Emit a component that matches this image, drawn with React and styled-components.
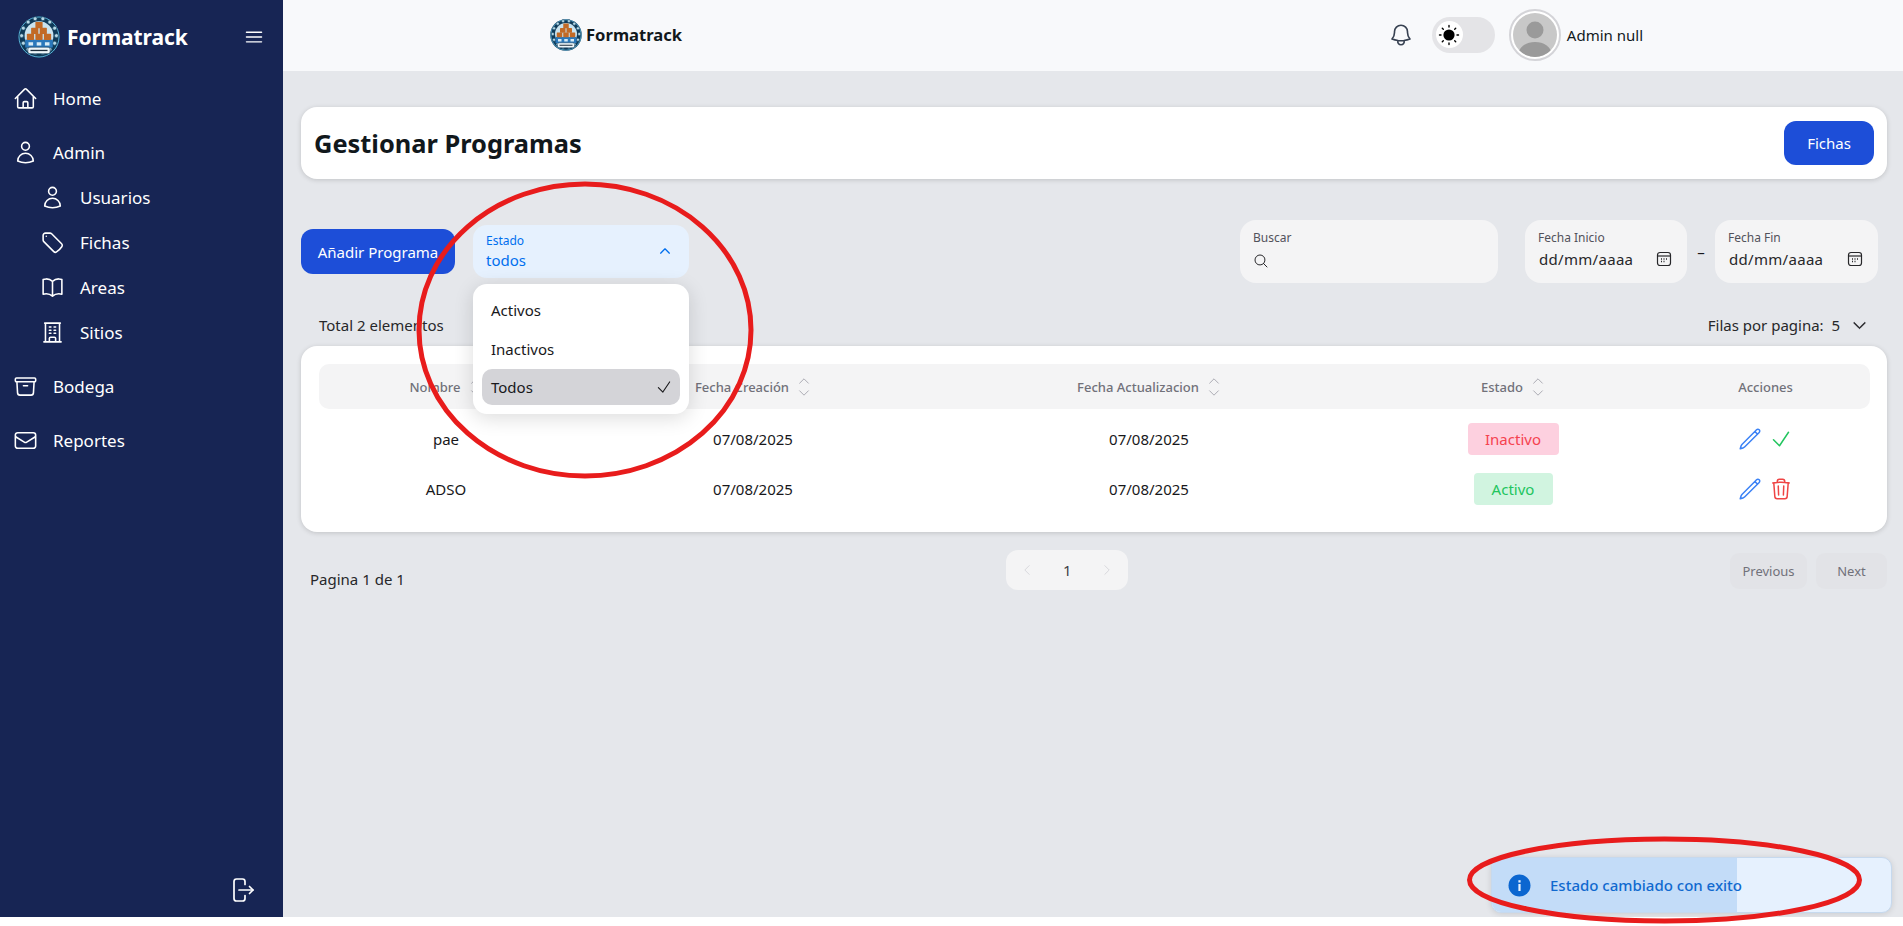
import React from "react";
import styled, { createGlobalStyle } from "styled-components";
import {
  HiOutlineHome, HiOutlineUser, HiOutlineTag, HiOutlineBookOpen, HiOutlineBuildingOffice,
  HiOutlineArchiveBox, HiOutlineEnvelope, HiOutlineBars3, HiOutlineBell, HiOutlinePencil,
  HiOutlineCheck, HiOutlineTrash, HiOutlineMagnifyingGlass, HiOutlineChevronUp, HiOutlineChevronDown,
  HiOutlineChevronLeft, HiOutlineChevronRight, HiChevronDown,
} from "react-icons/hi2";

const Global = createGlobalStyle`
  html, body { margin: 0; padding: 0; background: #fff; }
  body { font-family: "Noto Sans", "Open Sans", "Liberation Sans", sans-serif; color: #11181c; overflow: hidden; }
  * { box-sizing: border-box; }
`;

const Shell = styled.div`display: flex; height: 917px; width: 1903px; position: relative;`;

const Sidebar = styled.aside`
  width: 283px; flex: none; background: #172554; color: #fff;
  display: flex; flex-direction: column; padding: 0 0 14px;
`;
const Brand = styled.div`
  display: flex; align-items: center; height: 76px; padding: 0 18px 2px 18px; gap: 7px;
`;
const BrandName = styled.span`font-size: 21px; font-weight: 700; letter-spacing: -0.1px; flex: 1;`;
const Nav = styled.nav`display: flex; flex-direction: column; gap: 10px; flex: 1;`;
const Group = styled.div`display: flex; flex-direction: column; margin-bottom: -1px;`;
const NavItem = styled.a`
  display: flex; align-items: center; height: 44px; padding-left: 13px; gap: 15px;
  font-size: 17px; color: #fff; svg { font-size: 25px; flex: none; }
`;
const AdminItem = styled(NavItem)`height: 45px;`;
const SubItem = styled(NavItem)`height: 45px; padding-left: 40px;`;
const SideFoot = styled.div`display: flex; justify-content: flex-end; padding-right: 27px;`;

const Main = styled.div`flex: 1; min-width: 0; display: flex; flex-direction: column; background: #e5e7eb;`;
const Header = styled.header`
  height: 71px; background: #f8f9fb; display: flex; align-items: center; padding: 0 260px 2px 267px;
`;
const HeaderBrand = styled.div`display: flex; align-items: center; gap: 4px; flex: 1;`;
const HeaderName = styled.span`font-size: 16.600px; font-weight: 700; color: #11181c;`;
const HeaderRight = styled.div`display: flex; align-items: center;`;
const Bell = styled(HiOutlineBell)`font-size: 26px; color: #374151; margin-right: 18px;`;
const Toggle = styled.div`
  width: 63px; height: 36px; border-radius: 18px; background: #e4e4e7; display: flex; align-items: center;
  padding-left: 4px; margin-right: 14px;
`;
const Knob = styled.div`
  width: 27px; height: 27px; border-radius: 50%; background: #fff; display: flex; align-items: center; justify-content: center;
`;
const Avatar = styled.div`
  width: 52px; height: 52px; border-radius: 50%; background: #fff; border: 2px solid #d4d4d8; padding: 2px; margin-right: 6px;
  svg { display: block; width: 100%; height: 100%; border-radius: 50%; }
`;
const UserName = styled.span`font-size: 15px; color: #11181c;`;

const Content = styled.main`padding: 36px 16px 0 18px; display: flex; flex-direction: column; flex: 1;`;
const TitleCard = styled.section`
  height: 72px; background: #fff; border-radius: 16px; box-shadow: 0 1px 5px rgba(0,0,0,.16);
  display: flex; align-items: center; justify-content: space-between; padding: 0 13px 0 13px;
`;
const Title = styled.h1`margin: 0; font-size: 25.400px; font-weight: 700; color: #11181c;`;
const PrimaryBtn = styled.button`
  border: 0; background: #1d4ed8; color: #fff; font: inherit; font-size: 15px; border-radius: 12px;
  width: ${p => p.$w}px; height: ${p => p.$h}px; padding: 0;
`;
const Toolbar = styled.div`display: flex; align-items: center; margin-top: 41px; height: 63px;`;
const SelectWrap = styled.div`position: relative; margin-left: 18px; margin-right: auto;`;
const SelectBox = styled.div`
  width: 216px; height: 53px; background: #e6f1fe; border-radius: 14px; color: #006fee;
  padding: 8px 13px; display: flex; flex-direction: column; position: relative;
`;
const SelLabel = styled.span`font-size: 12px; line-height: 16px;`;
const SelValue = styled.span`font-size: 15px; line-height: 23px;`;
const SelChevron = styled(HiOutlineChevronUp)`
  position: absolute; right: 17px; top: 19px; font-size: 14px; stroke-width: 2.200;
`;
const Menu = styled.div`
  position: absolute; left: 0; top: 59px; width: 216px; height: 130px; background: #fff; border-radius: 14px;
  box-shadow: 0 4px 20px rgba(0,0,0,.14); padding: 6px 9px; display: flex; flex-direction: column; z-index: 5;
`;
const MenuItem = styled.div`
  display: flex; align-items: center; justify-content: space-between; height: ${p => p.$sel ? 36 : 39}px;
  margin-top: ${p => p.$sel ? 1 : 0}px;
  font-size: 15px; padding: 0 7px 0 9px; border-radius: 10px; background: ${p => p.$sel ? "#d4d4d8" : "transparent"};
  color: #18181b; svg { font-size: 18px; }
`;
const SearchBox = styled.div`
  width: 258px; height: 63px; background: #f4f4f5; border-radius: 16px; padding: 10px 13px; display: flex; flex-direction: column; gap: 7px;
  color: #52525b; svg { font-size: 16px; color: #27272a; }
`;
const FieldLabel = styled.span`font-size: 12px; line-height: 16px; color: #52525b;`;
const Dates = styled.div`display: flex; align-items: center; margin-left: 27px; margin-right: 9px;`;
const Dash = styled.span`width: 28px; text-align: center; font-size: 15px; color: #18181b;`;
const DateBox = styled.div`
  width: ${p => p.$w}px; height: 63px; background: #f4f4f5; border-radius: 16px; padding: 10px 15px 10px 13px; display: flex; flex-direction: column; gap: 3px;
`;
const DateRow = styled.div`
  display: flex; align-items: center; justify-content: space-between; font-size: 15px; color: #27272a; letter-spacing: .3px; padding-left: 1px;
`;
const Meta = styled.div`
  display: flex; align-items: center; justify-content: space-between; height: 20px; margin-top: 32px; margin-bottom: 11px;
  padding: 0 19px 0 18px; font-size: 15px; color: #27272a;
`;
const PerPage = styled.div`display: flex; align-items: center; gap: 11px; svg { font-size: 17px; color: #18181b; stroke: #18181b; stroke-width: .6; }`;
const TableCard = styled.section`
  height: 186px; background: #fff; border-radius: 16px; box-shadow: 0 1px 5px rgba(0,0,0,.16); padding: 18px 17px 18px 18px;
`;
const Row = styled.div`display: grid; grid-template-columns: 254px 360px 432px 296px 209px; align-items: center; text-align: center;`;
const HeadRow = styled(Row)`height: 45px; background: #f4f4f5; border-radius: 10px; margin-bottom: 5px;`;
const Th = styled.div`
  display: flex; align-items: center; justify-content: center; gap: 8px; font-size: 13px; font-weight: 500; color: #71717a;
`;
const SortIcon = styled.span`display: inline-flex; flex-direction: column; color: #a1a1aa; svg { font-size: 14px; display: block; margin: -1px 0; }`;
const BodyRow = styled(Row)`height: 50px; font-size: 15px; color: #18181b;`;
const Chip = styled.span`
  display: inline-flex; align-items: center; justify-content: center; height: 32px; width: ${p => p.$w}px; border-radius: 4px;
  font-size: 15px; background: ${p => p.$on ? "#d1f4e0" : "#fdd0df"}; color: ${p => p.$on ? "#22c55e" : "#f5424f"};
`;
const Actions = styled.div`display: flex; align-items: center; justify-content: center; gap: 7px;`;
const Act = styled.span`display: inline-flex; font-size: 24px; color: ${p => p.$c};`;
const Pager = styled.div`display: flex; align-items: center; justify-content: space-between; margin-top: 18px; height: 40px;`;
const PageInfo = styled.span`font-size: 15px; color: #27272a; margin: 18px 0 0 9px;`;
const PageBox = styled.div`
  width: 122px; height: 40px; background: #f4f4f5; border-radius: 12px; display: flex; align-items: center; justify-content: space-between;
  padding: 0 14px; font-size: 15px; color: #3f3f46; svg { font-size: 14px; color: #d4d4d8; }
`;
const PrevNext = styled.div`display: flex; gap: 9px; margin-top: 2px;`;
const GhostBtn = styled.button`
  border: 0; background: #e2e3e7; color: #71717a; font: inherit; font-size: 13px; border-radius: 9px; height: 36px; width: ${p => p.$w}px; padding: 0;
`;
const Toast = styled.div`
  position: absolute; left: 1491px; top: 857px; width: 401px; height: 56px; background: #e6f1fe; border: 1px solid #c6d9ee; border-radius: 10px;
  box-shadow: 0 1px 6px rgba(0,0,0,.12); overflow: hidden; display: flex; align-items: center; padding-left: 16px; gap: 19px;
  font-size: 15px; font-weight: 500; color: #1069cf;
`;
const ToastBar = styled.div`position: absolute; left: 0; top: 0; bottom: 0; background: #c3dcf8;`;
const ToastText = styled.span`position: relative;`;
const Annot = styled.svg`position: absolute; left: 0; top: 0; width: 1903px; height: 926px; pointer-events: none; z-index: 20;`;

const Logo = ({ size }) => {
  const beads = Array.from({ length: 14 }, (_, i) => {
    const a = (i / 14) * Math.PI * 2;
    return <circle key={i} cx={32 + 26.5 * Math.cos(a)} cy={30 + 26.5 * Math.sin(a)} r="3" fill="#b6d8e6" stroke="#1a4a68" strokeWidth="1" />;
  });
  const boxes = [[26.5, 9], [20, 18], [33, 18], [13.5, 27], [26.5, 27], [39.5, 27]];
  return (
    <svg width={size} height={size} viewBox="0 0 64 64">
      <circle cx="32" cy="32" r="31.500" fill="#0f3a58" />
      <circle cx="32" cy="32" r="30.500" fill="none" stroke="#5ab0d8" strokeWidth="1.500" />
      {beads}
      <circle cx="32" cy="30" r="22" fill="#c9e3ef" />
      <rect x="11" y="36" width="42" height="12" fill="#2a78bb" />
      {boxes.map(([x, y], i) => <rect key={i} x={x} y={y} width="11" height="9.500" rx="1" fill="#c26a26" />)}
      <rect x="16" y="40" width="7" height="5" fill="#d8ecf6" /><rect x="28.500" y="40" width="7" height="5" fill="#d8ecf6" /><rect x="41" y="40" width="7" height="5" fill="#d8ecf6" />
      <rect x="15" y="47.500" width="34" height="10" rx="3" fill="#eef6fa" stroke="#0f3a58" strokeWidth="1" />
      <rect x="19" y="51.500" width="26" height="2" fill="#1d2c3a" />
    </svg>
  );
};

const Logout = () => (
  <svg width="26" height="26" viewBox="0 0 26 26" fill="none" stroke="#fff" strokeWidth="1.700" strokeLinecap="round" strokeLinejoin="round">
    <path d="M15 7.500V4.500a2.500 2.500 0 0 0-2.500-2.500H6.500A2.500 2.500 0 0 0 4 4.500v17A2.500 2.500 0 0 0 6.500 24h6a2.500 2.500 0 0 0 2.500-2.500v-3" />
    <path d="M9 13h14" /><path d="M19.500 9.500 23 13l-3.500 3.500" />
  </svg>
);

const Sun = () => (
  <svg width="22" height="22" viewBox="0 0 22 22">
    <circle cx="11" cy="11" r="5.600" fill="#000" />
    <g stroke="#000" strokeWidth="1.400" strokeLinecap="round">
      <path d="M11 1.500v1.500M11 19v1.500M1.500 11H3M19 11h1.500M4.300 4.300l1 1M16.700 16.700l1 1M4.300 17.700l1-1M16.700 5.300l1-1" />
    </g>
  </svg>
);

const AvatarArt = () => (
  <svg viewBox="0 0 44 44">
    <rect width="44" height="44" fill="#c8c8c8" />
    <circle cx="22" cy="17" r="8.500" fill="#9a9a9a" />
    <ellipse cx="22" cy="40" rx="16" ry="11" fill="#9a9a9a" />
  </svg>
);

const CalIcon = () => (
  <svg width="16" height="16" viewBox="0 0 16 16" fill="none" stroke="#27272a" strokeWidth="1.200">
    <rect x="1.500" y="1.500" width="13" height="13" rx="2.500" />
    <path d="M1.500 5h13" />
    <path d="M5 8h1M7.500 8h1M10 8h1M5 10.500h1M7.500 10.500h1" strokeWidth="1.300" />
  </svg>
);

const Sort = () => (
  <SortIcon><HiOutlineChevronUp /><HiOutlineChevronDown /></SortIcon>
);

const InfoIcon = () => (
  <svg width="23" height="23" viewBox="0 0 23 23" style={{ position: "relative", flex: "none" }}>
    <circle cx="11.500" cy="11.500" r="11" fill="#0b66d0" />
    <rect x="10.400" y="10" width="2.200" height="7" fill="#e6f1fe" />
    <rect x="10.400" y="6.200" width="2.200" height="2.300" fill="#e6f1fe" />
  </svg>
);

const rows = [
  { name: "pae", on: false },
  { name: "ADSO", on: true },
];

export default function App() {
  return (
    <>
      <Global />
      <Shell>
        <Sidebar>
          <Brand>
            <Logo size={42} />
            <BrandName>Formatrack</BrandName>
            <HiOutlineBars3 size={22} />
          </Brand>
          <Nav>
            <NavItem><HiOutlineHome />Home</NavItem>
            <Group>
              <AdminItem><HiOutlineUser />Admin</AdminItem>
              <SubItem><HiOutlineUser />Usuarios</SubItem>
              <SubItem><HiOutlineTag />Fichas</SubItem>
              <SubItem><HiOutlineBookOpen />Areas</SubItem>
              <SubItem><HiOutlineBuildingOffice />Sitios</SubItem>
            </Group>
            <NavItem><HiOutlineArchiveBox />Bodega</NavItem>
            <NavItem><HiOutlineEnvelope />Reportes</NavItem>
          </Nav>
          <SideFoot><Logout /></SideFoot>
        </Sidebar>
        <Main>
          <Header>
            <HeaderBrand><Logo size={32} /><HeaderName>Formatrack</HeaderName></HeaderBrand>
            <HeaderRight>
              <Bell />
              <Toggle><Knob><Sun /></Knob></Toggle>
              <Avatar><AvatarArt /></Avatar>
              <UserName>Admin null</UserName>
            </HeaderRight>
          </Header>
          <Content>
            <TitleCard>
              <Title>Gestionar Programas</Title>
              <PrimaryBtn $w={90} $h={44}>Fichas</PrimaryBtn>
            </TitleCard>
            <Toolbar>
              <PrimaryBtn $w={154} $h={45}>Añadir Programa</PrimaryBtn>
              <SelectWrap>
                <SelectBox>
                  <SelLabel>Estado</SelLabel>
                  <SelValue>todos</SelValue>
                  <SelChevron />
                </SelectBox>
                <Menu>
                  <MenuItem>Activos</MenuItem>
                  <MenuItem>Inactivos</MenuItem>
                  <MenuItem $sel>Todos<HiOutlineCheck /></MenuItem>
                </Menu>
              </SelectWrap>
              <SearchBox>
                <FieldLabel>Buscar</FieldLabel>
                <HiOutlineMagnifyingGlass />
              </SearchBox>
              <Dates>
                <DateBox $w={162}>
                  <FieldLabel>Fecha Inicio</FieldLabel>
                  <DateRow>dd/mm/aaaa<CalIcon /></DateRow>
                </DateBox>
                <Dash>–</Dash>
                <DateBox $w={163}>
                  <FieldLabel>Fecha Fin</FieldLabel>
                  <DateRow>dd/mm/aaaa<CalIcon /></DateRow>
                </DateBox>
              </Dates>
            </Toolbar>
            <Meta>
              <span>Total 2 elementos</span>
              <PerPage><span>Filas por pagina:&nbsp;&nbsp;5</span><HiChevronDown /></PerPage>
            </Meta>
            <TableCard>
              <HeadRow>
                <Th>Nombre<Sort /></Th>
                <Th>Fecha Creación<Sort /></Th>
                <Th>Fecha Actualizacion<Sort /></Th>
                <Th>Estado<Sort /></Th>
                <Th>Acciones</Th>
              </HeadRow>
              {rows.map(r => (
                <BodyRow key={r.name}>
                  <div>{r.name}</div>
                  <div>07/08/2025</div>
                  <div>07/08/2025</div>
                  <div><Chip $on={r.on} $w={r.on ? 79 : 91}>{r.on ? "Activo" : "Inactivo"}</Chip></div>
                  <Actions>
                    <Act $c="#3b82f6"><HiOutlinePencil /></Act>
                    {r.on ? <Act $c="#ef4444"><HiOutlineTrash /></Act> : <Act $c="#22c55e"><HiOutlineCheck /></Act>}
                  </Actions>
                </BodyRow>
              ))}
            </TableCard>
            <Pager>
              <PageInfo>Pagina 1 de 1</PageInfo>
              <PageBox><HiOutlineChevronLeft /><span>1</span><HiOutlineChevronRight /></PageBox>
              <PrevNext>
                <GhostBtn $w={77}>Previous</GhostBtn>
                <GhostBtn $w={71}>Next</GhostBtn>
              </PrevNext>
            </Pager>
          </Content>
        </Main>
        <Toast>
          <ToastBar style={{ width: "61.500%" }} />
          <InfoIcon />
          <ToastText>Estado cambiado con exito</ToastText>
        </Toast>
      </Shell>
      <Annot viewBox="0 0 1903 926">
        <ellipse cx="585" cy="330" rx="166" ry="146" fill="none" stroke="#e81c1c" strokeWidth="5" />
        <ellipse cx="1664.500" cy="880" rx="195" ry="41" fill="none" stroke="#e81c1c" strokeWidth="5" />
      </Annot>
    </>
  );
}
